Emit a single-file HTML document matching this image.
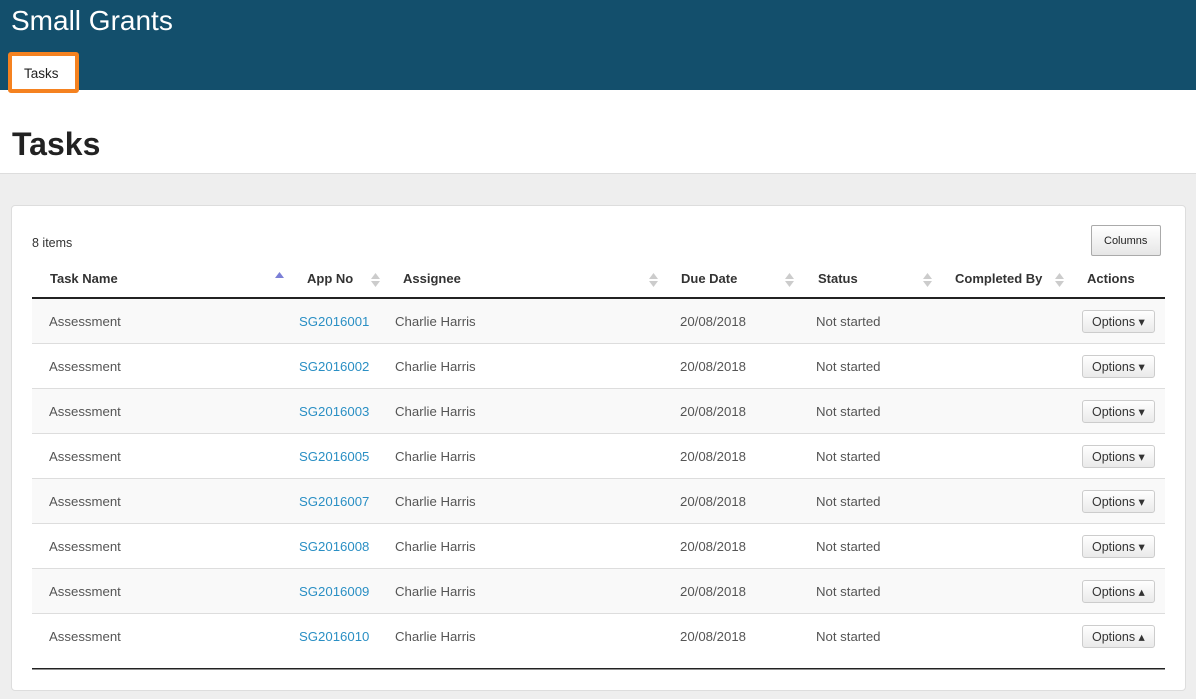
<!DOCTYPE html>
<html><head><meta charset="utf-8"><style>
*{margin:0;padding:0;box-sizing:border-box}
body{width:1196px;height:699px;background:#eee;font-family:"Liberation Sans",Arial,sans-serif;position:relative;overflow:hidden;color:#333}
.hdr{position:absolute;left:0;top:0;width:1196px;height:90px;background:#134f6c}
.brand{position:absolute;left:11px;top:5px;font-size:28px;color:#fff}
.tab{position:absolute;z-index:5;left:8px;top:52px;width:71px;height:41px;border:4px solid #f58220;border-radius:3px;background:#fff;font-size:13.5px;color:#222;padding:10px 0 0 12px}
.white{position:absolute;left:0;top:90px;width:1196px;height:84px;background:#fff;border-bottom:1px solid #ddd}
h1{position:absolute;left:12px;top:126px;font-size:32px;font-weight:bold;color:#222}
.card{position:absolute;left:11px;top:205px;width:1175px;height:486px;background:#fff;border:1px solid #ddd;border-radius:4px}
.a{position:absolute;font-size:13.2px;white-space:nowrap;color:#555}
.th{font-weight:bold;color:#333;top:271px;font-size:13px}
.row{position:absolute;left:32px;width:1133px;height:45px;border-bottom:1px solid #ddd}
.btn{position:absolute;left:1082px;width:73px;height:23px;border:1px solid #ccc;border-radius:3px;background:linear-gradient(#fff,#eaeaea);font-size:12.5px;color:#333;padding:3px 0 0 9px}
.cb{position:absolute;left:1091px;top:225px;width:70px;height:31px;border:1px solid #aaa;border-radius:2px;background:linear-gradient(#fff,#e6e6e6);font-size:11px;padding:9px 0 0 12px;color:#222}
a{color:#2a8fc4;text-decoration:none}
</style></head><body>
<div class="hdr"><div class="brand">Small Grants</div></div>
<div class="tab">Tasks</div>
<div class="white"></div>
<h1>Tasks</h1>
<div class="card"></div>
<div class="a" style="left:32px;top:236px;font-size:12.5px;color:#333">8 items</div>
<div class="cb">Columns</div>
<div class="a th" style="left:50px">Task Name</div>
<div class="a th" style="left:307px">App No</div>
<div class="a th" style="left:403px">Assignee</div>
<div class="a th" style="left:681px">Due Date</div>
<div class="a th" style="left:818px">Status</div>
<div class="a th" style="left:955px">Completed By</div>
<div class="a th" style="left:1087px">Actions</div>
<svg style="position:absolute;left:0;top:0" width="1196" height="699">
<polygon points="275,278 284,278 279.5,272" fill="#7b7fd6"/>
<g fill="#ccc">
<polygon points="371,279 380,279 375.5,273"/><polygon points="371,281 380,281 375.5,287"/>
<polygon points="649,279 658,279 653.5,273"/><polygon points="649,281 658,281 653.5,287"/>
<polygon points="785,279 794,279 789.5,273"/><polygon points="785,281 794,281 789.5,287"/>
<polygon points="923,279 932,279 927.5,273"/><polygon points="923,281 932,281 927.5,287"/>
<polygon points="1055,279 1064,279 1059.5,273"/><polygon points="1055,281 1064,281 1059.5,287"/>
</g>
<rect x="32" y="297" width="1133" height="2" fill="#222"/>
<rect x="32" y="668" width="1133" height="1.5" fill="#222"/>
</svg>
<div class="row" style="top:299px;background:#f9f9f9"></div>
<div class="row" style="top:344px"></div>
<div class="row" style="top:389px;background:#f9f9f9"></div>
<div class="row" style="top:434px"></div>
<div class="row" style="top:479px;background:#f9f9f9"></div>
<div class="row" style="top:524px"></div>
<div class="row" style="top:569px;background:#f9f9f9"></div>
<div class="row" style="top:614px;border-bottom:none"></div>

<div class="a" style="left:49px;top:314px">Assessment</div><div class="a" style="left:299px;top:314px"><a>SG2016001</a></div><div class="a" style="left:395px;top:314px">Charlie Harris</div><div class="a" style="left:680px;top:314px">20/08/2018</div><div class="a" style="left:816px;top:314px">Not started</div><div class="btn" style="top:310px">Options ▾</div>
<div class="a" style="left:49px;top:359px">Assessment</div><div class="a" style="left:299px;top:359px"><a>SG2016002</a></div><div class="a" style="left:395px;top:359px">Charlie Harris</div><div class="a" style="left:680px;top:359px">20/08/2018</div><div class="a" style="left:816px;top:359px">Not started</div><div class="btn" style="top:355px">Options ▾</div>
<div class="a" style="left:49px;top:404px">Assessment</div><div class="a" style="left:299px;top:404px"><a>SG2016003</a></div><div class="a" style="left:395px;top:404px">Charlie Harris</div><div class="a" style="left:680px;top:404px">20/08/2018</div><div class="a" style="left:816px;top:404px">Not started</div><div class="btn" style="top:400px">Options ▾</div>
<div class="a" style="left:49px;top:449px">Assessment</div><div class="a" style="left:299px;top:449px"><a>SG2016005</a></div><div class="a" style="left:395px;top:449px">Charlie Harris</div><div class="a" style="left:680px;top:449px">20/08/2018</div><div class="a" style="left:816px;top:449px">Not started</div><div class="btn" style="top:445px">Options ▾</div>
<div class="a" style="left:49px;top:494px">Assessment</div><div class="a" style="left:299px;top:494px"><a>SG2016007</a></div><div class="a" style="left:395px;top:494px">Charlie Harris</div><div class="a" style="left:680px;top:494px">20/08/2018</div><div class="a" style="left:816px;top:494px">Not started</div><div class="btn" style="top:490px">Options ▾</div>
<div class="a" style="left:49px;top:539px">Assessment</div><div class="a" style="left:299px;top:539px"><a>SG2016008</a></div><div class="a" style="left:395px;top:539px">Charlie Harris</div><div class="a" style="left:680px;top:539px">20/08/2018</div><div class="a" style="left:816px;top:539px">Not started</div><div class="btn" style="top:535px">Options ▾</div>
<div class="a" style="left:49px;top:584px">Assessment</div><div class="a" style="left:299px;top:584px"><a>SG2016009</a></div><div class="a" style="left:395px;top:584px">Charlie Harris</div><div class="a" style="left:680px;top:584px">20/08/2018</div><div class="a" style="left:816px;top:584px">Not started</div><div class="btn" style="top:580px">Options ▴</div>
<div class="a" style="left:49px;top:629px">Assessment</div><div class="a" style="left:299px;top:629px"><a>SG2016010</a></div><div class="a" style="left:395px;top:629px">Charlie Harris</div><div class="a" style="left:680px;top:629px">20/08/2018</div><div class="a" style="left:816px;top:629px">Not started</div><div class="btn" style="top:625px">Options ▴</div>
</body></html>
